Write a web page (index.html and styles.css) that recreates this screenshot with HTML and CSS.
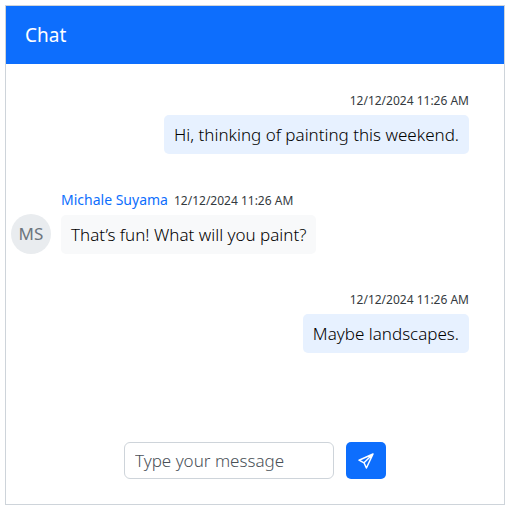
FILE: index.html
```html
<!DOCTYPE html>
<html lang="en">
<head>
<meta charset="utf-8">
<meta name="viewport" content="width=device-width, initial-scale=1">
<title>Chat</title>
<link rel="stylesheet" href="styles.css">
</head>
<body>
<main class="chat">
  <header class="chat-header"><h1>Chat</h1></header>
  <section class="messages" aria-label="Messages">
    <article class="message own">
      <div class="meta"><time>12/12/2024 11:26 AM</time></div>
      <p class="bubble">Hi, thinking of painting this weekend.</p>
    </article>
    <article class="message">
      <span class="avatar">MS</span>
      <div class="content">
        <div class="meta"><span class="author">Michale Suyama</span><time>12/12/2024 11:26 AM</time></div>
        <p class="bubble">That’s fun! What will you paint?</p>
      </div>
    </article>
    <article class="message own">
      <div class="meta"><time>12/12/2024 11:26 AM</time></div>
      <p class="bubble">Maybe landscapes.</p>
    </article>
  </section>
  <form class="composer">
    <input class="field" type="text" placeholder="Type your message" aria-label="Type your message">
    <button class="send" type="button" aria-label="Send">
      <svg viewBox="0 0 16 16" width="16" height="16" fill="none" stroke="currentColor" stroke-width="1.5" stroke-linejoin="round" aria-hidden="true">
        <path d="M15 1 L1 7.2 L6 9.8 L8.4 15 Z M15 1 L6 9.8 M15 1 L8.4 15"/>
      </svg>
    </button>
  </form>
</main>
</body>
</html>
```
FILE: styles.css
```css
* {
  box-sizing: border-box;
}

body {
  margin: 0;
  padding: 5px 6px 5px 5px;
  min-height: 100vh;
  display: flex;
  background: #fff;
  color: #212529;
  font-family: "Segoe UI", "Noto Sans", "Open Sans", sans-serif;
  font-size: 17px;
  line-height: 25px;
}

.chat {
  flex: 1;
  display: flex;
  flex-direction: column;
  border: 1px solid #ced4da;
}

.chat-header {
  padding: 17px 19px;
  background: #0d6efd;
  color: #fff;
}

.chat-header h1 {
  margin: 0;
  font-size: 19px;
  font-weight: 400;
  line-height: 24px;
}

.messages {
  flex: 1;
  display: flex;
  flex-direction: column;
  gap: 36px;
  padding: 27px 35px 0 5px;
}

.message {
  display: flex;
  align-items: flex-end;
  gap: 10px;
}

.message.own {
  flex-direction: column;
  gap: 4px;
}

.content {
  display: flex;
  flex-direction: column;
  align-items: flex-start;
  gap: 4px;
}

.meta {
  display: flex;
  align-items: baseline;
  gap: 6px;
  line-height: 20px;
}

.meta time {
  font-size: 12px;
  color: #343a40;
}

.author {
  color: #0d6efd;
  font-size: 14px;
}

.bubble {
  margin: 0;
  padding: 7px 10px;
  border-radius: 5px;
  background: #f8f9fa;
  color: #000;
  font-weight: 300;
}

.own .bubble {
  background: #e7f1ff;
}

.avatar {
  flex: none;
  width: 40px;
  height: 40px;
  border-radius: 50%;
  background: #e9ecef;
  color: #6c757d;
  line-height: 40px;
  text-align: center;
}

.composer {
  display: flex;
  justify-content: center;
  gap: 12px;
  padding: 0 0 25px;
}

.field {
  width: 210px;
  height: 37px;
  padding: 0 10px;
  border: 1px solid #ced4da;
  border-radius: 6px;
  background: #fff;
  color: inherit;
  font: inherit;
  font-weight: 300;
}

.field::placeholder {
  color: #495057;
  opacity: 1;
}

.send {
  display: grid;
  place-items: center;
  width: 40px;
  height: 37px;
  padding: 0;
  border: 0;
  border-radius: 5px;
  background: #0d6efd;
  color: #fff;
}
```
